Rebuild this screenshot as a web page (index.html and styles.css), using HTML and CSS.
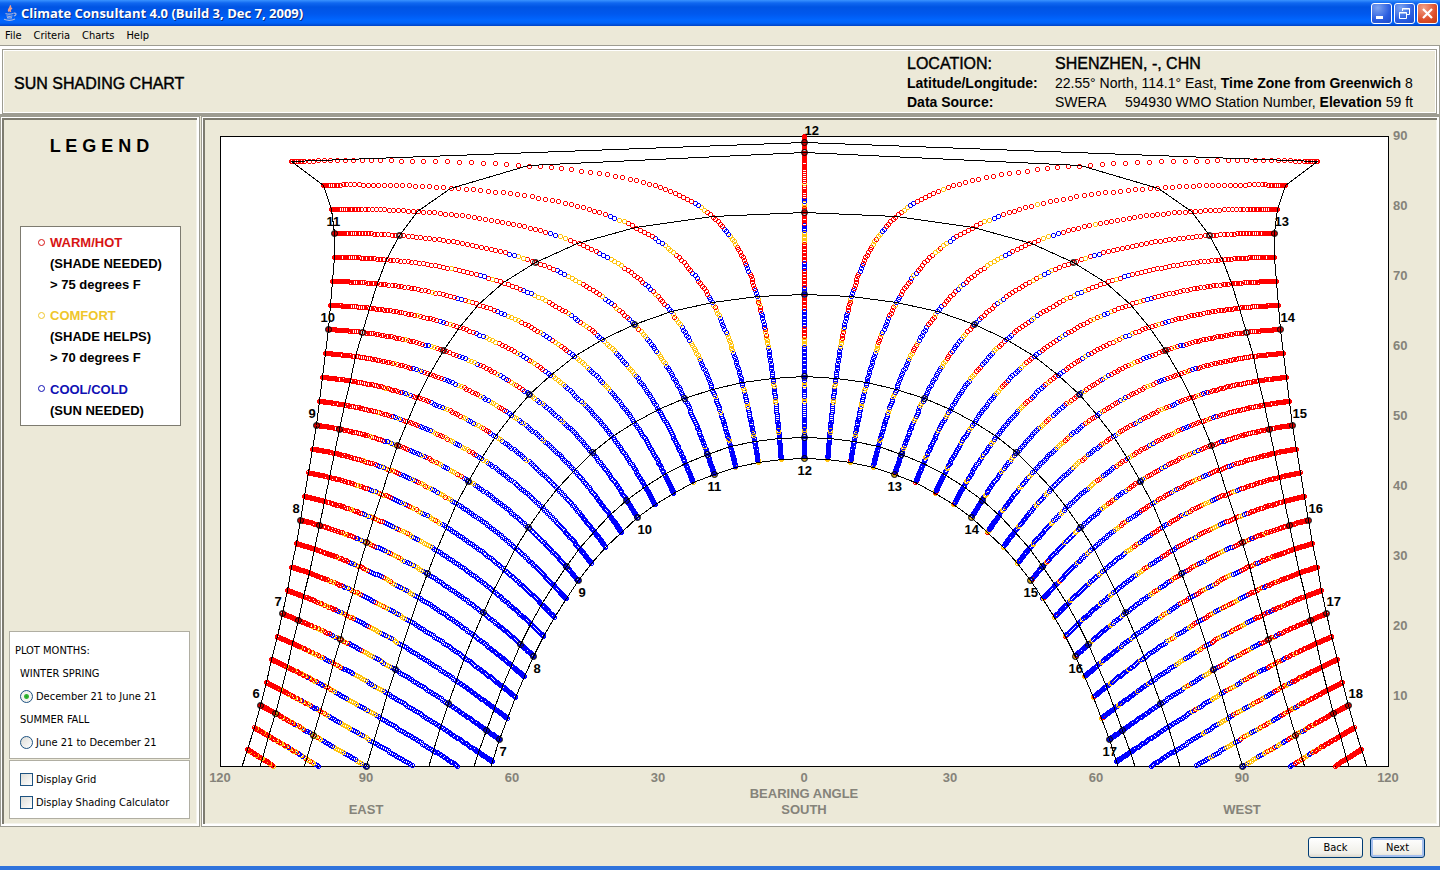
FILE: index.html
```html
<!DOCTYPE html>
<html lang="en">
<head>
    <meta charset="UTF-8">
    <meta name="viewport" content="width=device-width, initial-scale=1.0">
    <title>Climate Consultant 4.0</title>
    <link rel="stylesheet" href="styles.css">
</head>
<body>

    <header class="title-bar">
        <svg class="java-icon" width="16" height="16" viewBox="0 0 16 16" fill="none">
            <path d="M8 0.5C10 2.5 5 4 7 6.5M10 3C7.5 4.5 8 5 8.5 7" stroke="#f0a08a" stroke-width="1.6"/>
            <path d="M3.5 8.5C5 9.3 9 9.3 11 8.5M4.5 10.7C6 11.3 9 11.3 10.5 10.7M5 12.6C6.5 13 9 13 10 12.6M2 14.3C5 15.5 10 15.5 13 14M11.5 8.3C15 7.5 14.5 10.5 11.8 11" stroke="#a9b6dd" stroke-width="1.2"/>
        </svg>
        <h1>Climate Consultant 4.0 (Build 3, Dec 7, 2009)</h1>
        <div class="window-buttons">
            <button type="button" aria-label="Minimize">
                <svg width="19" height="19" viewBox="0 0 19 19"><rect x="4" y="12" width="7" height="3" fill="#fff"/></svg>
            </button>
            <button type="button" aria-label="Restore">
                <svg width="19" height="19" viewBox="0 0 19 19" fill="none" stroke="#fff">
                    <path d="M7.5 7V4.5H14.5V10.5H12M7 5H15M4.5 8.5H11.5V14.5H4.5ZM4 9H12"/>
                </svg>
            </button>
            <button type="button" class="close" aria-label="Close">
                <svg width="19" height="19" viewBox="0 0 19 19"><path d="M5 5L14 14M14 5L5 14" stroke="#fff" stroke-width="2.2"/></svg>
            </button>
        </div>
    </header>

    <nav class="menu-bar">
        <button type="button">File</button>
        <button type="button">Criteria</button>
        <button type="button">Charts</button>
        <button type="button">Help</button>
    </nav>

    <section class="info">
        <h2>SUN SHADING CHART</h2>
        <dl>
            <dt class="big">LOCATION:</dt>
            <dd class="big">SHENZHEN, -, CHN</dd>
            <dt>Latitude/Longitude:</dt>
            <dd>22.55° North, 114.1° East, <b>Time Zone from Greenwich</b> 8</dd>
            <dt>Data Source:</dt>
            <dd>SWERA &nbsp; &nbsp; 594930 WMO Station Number, <b>Elevation</b> 59 ft</dd>
        </dl>
    </section>

    <main class="content">
        <aside class="panel side">
            <h3>L E G E N D</h3>
            <ul class="legend">
                <li class="hot"><b>WARM/HOT</b><br>(SHADE NEEDED)<br>&gt; 75 degrees F</li>
                <li class="comfort"><b>COMFORT</b><br>(SHADE HELPS)<br>&gt; 70 degrees F</li>
                <li class="cold"><b>COOL/COLD</b><br>(SUN NEEDED)</li>
            </ul>

            <form class="options">
                <fieldset class="months">
                    <legend>PLOT MONTHS:</legend>
                    <p>WINTER SPRING</p>
                    <label><input type="radio" name="months" checked>December 21 to June 21</label>
                    <p>SUMMER FALL</p>
                    <label><input type="radio" name="months">June 21 to December 21</label>
                </fieldset>
                <fieldset class="display">
                    <label><input type="checkbox">Display Grid</label>
                    <label><input type="checkbox">Display Shading Calculator</label>
                </fieldset>
            </form>
        </aside>

        <section class="panel chart-panel">
            <svg id="chart" viewBox="0 0 1233 703" role="img" aria-label="Sun shading chart"></svg>
        </section>
    </main>

    <footer class="buttons">
        <button type="button">Back</button>
        <button type="button" class="default">Next</button>
    </footer>

    <script src="chart.js"></script>
</body>
</html>
```
FILE: styles.css
```css
* {
    box-sizing: border-box;
}

body {
    margin: 0;
    min-height: 100vh;
    display: flex;
    flex-direction: column;
    background-color: #ece9d8;
    border-bottom: 4px solid #2f73dc;
    color: #000;
    font-family: "DejaVu Sans Condensed", "DejaVu Sans", sans-serif;
    font-size: 11px;
}

h1, h2, h3, dl, dd, p, ul, fieldset {
    margin: 0;
    padding: 0;
}

button {
    font: inherit;
    color: inherit;
}

/* Title bar */
.title-bar {
    height: 26px;
    padding: 0 2px;
    display: flex;
    align-items: center;
    gap: 3px;
    background: linear-gradient(#3a93ff 0, #1067f0 3px, #0054e3 7px, #0058ee 14px, #0066ff 20px, #0062f8 23px, #0042c4 26px);
}

.title-bar h1 {
    flex: 1;
    color: white;
    font-family: "Open Sans", sans-serif;
    font-size: 13px;
    line-height: 26px;
    text-shadow: 1px 1px #0a2a80;
}

.window-buttons {
    display: flex;
    gap: 2px;
}

.window-buttons button {
    width: 21px;
    height: 21px;
    padding: 0;
    border: 1px solid white;
    border-radius: 3px;
    background: radial-gradient(circle at 30% 20%, #7ea4f0, #2a5de0 60%, #1c4ac8);
}

.window-buttons .close {
    background: radial-gradient(circle at 30% 20%, #f0a088, #de4f2b 60%, #c03a14);
}

.window-buttons svg {
    display: block;
}

/* Menu */
.menu-bar {
    height: 19px;
    padding: 0 5px;
    display: flex;
    gap: 12px;
}

.menu-bar button {
    padding: 0;
    border: 0;
    background: none;
}

/* Location header */
.info {
    display: flex;
    justify-content: space-between;
    align-items: center;
    height: 71px;
    padding: 5px 12px 0 11px;
    border: 1px solid #9d9c92;
    border-width: 1px 1px 2px 0;
    background-color: #ece9d8;
    box-shadow: inset 0 3px white, inset 2px 0 white, inset -2px 0 white, inset 3px 4px #9d9c92, inset -3px -1px #9d9c92, inset 4px 5px white, inset -4px -2px white;
    font-family: "Liberation Sans", Arial, sans-serif;
    font-size: 14px;
}

.info h2 {
    padding: 2px 0 0 3px;
    font-size: 16px;
    font-weight: normal;
    -webkit-text-stroke: 0.4px black;
}

.info dl {
    width: 520px;
    display: grid;
    grid-template-columns: 148px auto;
    line-height: 19px;
}

.info dt {
    font-weight: bold;
}

.info .big {
    font-size: 16px;
    font-weight: normal;
    line-height: 20px;
    -webkit-text-stroke: 0.4px black;
}

/* Panels */
.content {
    flex: 1;
    display: flex;
    gap: 1px;
}

.panel {
    border: 1px solid #9d9c92;
    box-shadow: inset 1px 1px white, inset -2px -2px white, inset 3px 3px #7d7b70, inset -3px -3px #f5f4ec;
}

.side {
    width: 200px;
    padding: 3px 9px 7px 8px;
    display: flex;
    flex-direction: column;
}

.side h3 {
    margin-top: 14px;
    font-family: "Liberation Sans", Arial, sans-serif;
    font-size: 18px;
    line-height: 24px;
    text-align: center;
}

.legend {
    margin: 68px 9px 0 11px;
    padding: 5px 0 4px 29px;
    border: 1px solid #7d7b70;
    background-color: white;
    list-style: none;
    font-family: "Liberation Sans", Arial, sans-serif;
    font-size: 13px;
    font-weight: bold;
    line-height: 21px;
}

.legend li {
    position: relative;
    padding-bottom: 10px;
}

.legend li:last-child {
    padding: 1px 0 0;
}

.legend li::before {
    content: "";
    position: absolute;
    left: -12px;
    top: 7px;
    width: 5px;
    height: 5px;
    border: 1px solid;
    border-radius: 50%;
}

.hot b, .hot::before {
    color: #d71414;
}

.comfort b, .comfort::before {
    color: #efc62b;
}

.cold b, .cold::before {
    color: #1010b4;
}

.options {
    margin-top: auto;
    display: flex;
    flex-direction: column;
    gap: 1px;
}

.options fieldset {
    display: flex;
    flex-direction: column;
    border: 1px solid #b0aea2;
    background-color: white;
}

.months {
    height: 128px;
    padding: 7px 0 5px 10px;
    line-height: 23px;
}

.months legend {
    float: left;
    margin-left: -5px;
    padding: 0;
}

.display {
    height: 59px;
    padding: 7px 0 5px 10px;
    line-height: 23px;
}

.options label {
    display: flex;
    align-items: center;
    gap: 3px;
}

.options input {
    appearance: none;
    width: 13px;
    height: 13px;
    margin: 0;
    border: 1px solid #1d5281;
    background: linear-gradient(135deg, #dcdcd7, white);
}

.options input[type="radio"] {
    border-radius: 50%;
}

.options input[type="radio"]:checked {
    background: radial-gradient(circle, #21a121 0, #38b838 2px, #f3f3ef 3px);
}

.chart-panel {
    flex: 1;
    padding: 3px 2px;
}

#chart {
    display: block;
    width: 100%;
    font-family: "Liberation Sans", Arial, sans-serif;
    font-size: 13px;
    font-weight: bold;
}

.plot-area {
    fill: white;
    stroke: black;
}

.month-line {
    fill: none;
    stroke: black;
    shape-rendering: crispEdges;
}

.dot {
    fill: none;
    shape-rendering: crispEdges;
}

.mark {
    fill: rgba(0, 0, 0, 0.2);
    stroke: black;
}

.axis {
    fill: #85837a;
}

/* Bottom buttons */
.buttons {
    height: 39px;
    padding: 2px 15px 0;
    display: flex;
    justify-content: flex-end;
    align-items: center;
    gap: 7px;
}

.buttons button {
    width: 55px;
    height: 21px;
    padding: 0;
    border: 1px solid #003c74;
    border-radius: 3px;
    background: linear-gradient(white, #f0efe8 80%, #dcd8cc);
}

.buttons .default {
    box-shadow: inset 0 0 0 2px #a5bfee;
}
```
FILE: chart.js
```js
const LATITUDE = 22.55;
const RAD = Math.PI / 180;
const COLORS = { hot: '#ff0000', comfort: '#ffc20e', cold: '#0000ff' };

// Plot rectangle inside the svg
const plot = { left: 16, top: 16, width: 1168, height: 630 };

// Declination on the 21st of each month, December to June
const MONTHS = [-23.45, -20.4, -11.8, 0, 11.7, 20.2, 23.45];

// Noon condition by declination: upper limit, condition
const NOON = [
    [-23.2, 'comfort'], [-19.7, 'cold'], [-19.2, 'comfort'], [-15.5, 'cold'], [-14.9, 'comfort'],
    [-13.1, 'cold'], [-12.5, 'comfort'], [-7.3, 'cold'], [-6.2, 'comfort'], [-4.6, 'hot'],
    [-2.3, 'cold'], [-0.1, 'hot'], [1, 'cold'], [3.5, 'hot'], [4.7, 'cold'], [7.5, 'hot'],
    [9, 'comfort'], [10, 'cold'], [12.5, 'hot'], [13, 'comfort'], [13.9, 'cold'],
    [15.6, 'hot'], [16, 'comfort'], [24, 'hot']
];

function x(bearing) {
    return plot.left + plot.width / 2 + bearing * plot.width / 240;
}

function y(altitude) {
    return plot.top + plot.height - altitude * plot.height / 90;
}

function sunPosition(declination, hour) {
    const h = (hour - 12) * 15 * RAD;
    const lat = LATITUDE * RAD;
    const dec = declination * RAD;
    const sinAlt = Math.sin(lat) * Math.sin(dec) + Math.cos(lat) * Math.cos(dec) * Math.cos(h);
    const east = Math.cos(dec) * Math.sin(h);
    const south = Math.sin(lat) * Math.cos(dec) * Math.cos(h) - Math.cos(lat) * Math.sin(dec);
    const bearing = hour === 12 ? 0 : Math.atan2(east, south) / RAD;
    const altitude = Math.asin(sinAlt) / RAD;
    return { altitude: altitude, x: Math.round(x(bearing)) + 0.5, y: Math.round(y(altitude)) + 0.5 };
}

function noise(n) {
    const v = Math.sin(n * 12.9898) * 43758.5453;
    return (v - Math.floor(v)) * 2 - 1;
}

// Temperature in degrees F for a day of the half year and an hour
function temperature(day, declination, hour) {
    const condition = NOON.find(band => declination <= band[0])[1];
    const warm = Math.max(0, declination);
    let t = 66;
    if (condition === 'hot') t = 76 + warm * 0.35;
    if (condition === 'comfort') t = 72.5 + warm * 0.2;
    if (condition === 'cold') t = declination < -5 ? 64 : 67.5 + warm * 0.1;
    // winter mornings warm up late, winter afternoons stay mild
    if (hour < 12) t -= (12 - hour) * (declination < 0 ? 2.6 : 1.1);
    else if (hour < 15) t += (hour - 12) * 0.5;
    else t += 1.5 - (hour - 15) * (declination < 0 ? 2.4 : 1.6);
    if (hour > 12 && hour < 17 && declination < -23.1) t = 73;
    t += noise(day) * Math.min(2.4, Math.abs(hour - 12) * 1.5);
    t += noise(day * 7 + Math.floor(hour) * 31) * (hour > 12 ? 2.5 : 1);
    return t;
}

function condition(t) {
    if (t > 75) return 'hot';
    return t > 70 ? 'comfort' : 'cold';
}

function text(px, py, label, anchor, className) {
    return `<text x="${px}" y="${py}" text-anchor="${anchor}" class="${className}">${label}</text>`;
}

let svg = `<rect class="plot-area" x="${plot.left + 0.5}" y="${plot.top + 0.5}" width="${plot.width}" height="${plot.height}"/>`;
svg += `<clipPath id="plot-clip"><rect x="${plot.left}" y="0" width="${plot.width}" height="${plot.top + plot.height}"/></clipPath>`;

// One dot per day for every quarter of an hour
for (let hour = 5; hour <= 19; hour += 0.25) {
    for (let day = 0; day <= 182; day++) {
        const declination = -23.45 * Math.cos(day / 182 * Math.PI);
        const p = sunPosition(declination, hour);
        if (p.altitude < 0) continue;
        const color = COLORS[condition(temperature(day, declination, hour))];
        svg += `<circle class="dot" cx="${p.x}" cy="${p.y}" r="2" stroke="${color}"/>`;
    }
}

// Month lines with a mark on the hour
MONTHS.forEach(declination => {
    const points = [];
    for (let hour = 5; hour <= 19; hour += 0.25) {
        const p = sunPosition(declination, hour);
        if (p.altitude < -5) continue;
        points.push(p.x + ',' + p.y);
        if (hour % 1 === 0 && p.altitude > 0) {
            svg += `<circle class="mark" cx="${p.x}" cy="${p.y}" r="3"/>`;
        }
    }
    svg += `<polyline class="month-line" clip-path="url(#plot-clip)" points="${points.join(' ')}"/>`;
});

// Hour labels along the June and December lines
for (let hour = 6; hour <= 18; hour++) {
    const june = sunPosition(23.45, hour);
    svg += text(june.x - (hour < 12 ? 8 : 0), hour === 12 ? 15 : june.y - 8, hour, 'start', 'hour');
    if (hour > 6 && hour < 18) {
        const december = sunPosition(-23.45, hour);
        svg += text(december.x - (hour > 10 ? 7 : 0), december.y + 16, hour, 'start', 'hour');
    }
}

// Axis labels
for (let bearing = -120; bearing <= 120; bearing += 30) {
    svg += text(x(bearing), 662, Math.abs(bearing), 'middle', 'axis');
}
for (let altitude = 10; altitude <= 90; altitude += 10) {
    svg += text(1189, y(altitude) + 4, altitude, 'start', 'axis');
}
svg += text(x(0), 678, 'BEARING ANGLE', 'middle', 'axis');
svg += text(x(0), 694, 'SOUTH', 'middle', 'axis');
svg += text(x(-90), 694, 'EAST', 'middle', 'axis');
svg += text(x(90), 694, 'WEST', 'middle', 'axis');

document.getElementById('chart').innerHTML = svg;
```
